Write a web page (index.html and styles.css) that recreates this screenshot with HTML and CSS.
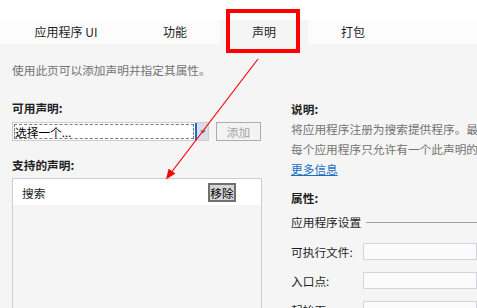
FILE: index.html
```html
<!DOCTYPE html>
<html lang="zh-CN">
<head>
<meta charset="utf-8">
<title>声明</title>
<link rel="stylesheet" href="styles.css">
</head>
<body>
<div class="page">
  <div class="top"></div>
  <div class="tabs">
    <div class="tab tab-wide">应用程序 UI</div>
    <div class="tab">功能</div>
    <div class="tab active">声明</div>
    <div class="tab">打包</div>
  </div>
  <div class="content">
    <div class="desc">使用此页可以添加声明并指定其属性。</div>
    <div class="cols">
      <div class="left">
        <div class="label">可用声明:</div>
        <div class="select-row">
          <div class="select">
            <div class="select-field"><span class="select-text">选择一个...</span></div>
            <div class="select-btn">
              <svg width="6" height="4" viewBox="0 0 6 4"><path d="M0 0.5 L6 0.5 L3 3.5 Z" fill="#5b7fae"/></svg>
            </div>
          </div>
          <div class="btn-add">添加</div>
        </div>
        <div class="label label-list">支持的声明:</div>
        <div class="list">
          <div class="list-row">
            <span class="list-item">搜索</span>
            <span class="btn-remove">移除</span>
          </div>
        </div>
      </div>
      <div class="right">
        <div class="label label-desc">说明:</div>
        <div class="text">将应用程序注册为搜索提供程序。最多只能声明一个此类扩展。</div>
        <div class="text">每个应用程序只允许有一个此声明的实例。</div>
        <div class="text"><a class="link" href="#">更多信息</a></div>
        <div class="label label-props">属性:</div>
        <div class="group">
          <span class="group-title">应用程序设置</span>
          <span class="group-line"></span>
        </div>
        <div class="field">
          <span class="field-label">可执行文件:</span>
          <span class="field-input"></span>
        </div>
        <div class="field">
          <span class="field-label">入口点:</span>
          <span class="field-input"></span>
        </div>
        <div class="field">
          <span class="field-label">起始页:</span>
          <span class="field-input"></span>
        </div>
      </div>
    </div>
  </div>
  <div class="highlight"></div>
  <svg class="arrow" width="477" height="308" viewBox="0 0 477 308">
    <line x1="258" y1="59" x2="170.5" y2="173.5" stroke="#ff0000" stroke-width="1.2"/>
    <polygon points="166,179.5 175.4,173.6 168.6,168.8" fill="#ff0000"/>
  </svg>
</div>
</body>
</html>
```

FILE: styles.css
```css
html, body {
  margin: 0;
  padding: 0;
  height: 100%;
  overflow: hidden;
  background: #ffffff;
}

body {
  font-family: "Noto Sans CJK SC", "Noto Sans", sans-serif;
  font-size: 11.7px;
  color: #1e1e1e;
}

.page {
  position: relative;
  height: 308px;
  display: flex;
  flex-direction: column;
}

.top {
  height: 20px;
  flex: none;
}

.tabs {
  flex: none;
  display: flex;
  gap: 1px;
  height: 24px;
  padding-left: 2px;
  background: #fcfcfc;
}

.tab {
  width: 88px;
  text-align: center;
  line-height: 24px;
  font-size: 12px;
  color: #1e1e1e;
  white-space: nowrap;
}

.tab-wide {
  width: 128px;
}

.tab.active {
  background: #f5f5f5;
}

.content {
  flex: 1;
  display: flex;
  flex-direction: column;
  background: #f5f5f5;
  padding: 16px 0 0 12px;
  min-height: 0;
}

.desc {
  line-height: 20px;
  color: #737373;
  white-space: nowrap;
}

.cols {
  flex: 1;
  display: flex;
  gap: 29px;
  min-height: 0;
}

.left {
  width: 250px;
  flex: none;
  display: flex;
  flex-direction: column;
}

.label {
  font-weight: bold;
  line-height: 20px;
  color: #1e1e1e;
  white-space: nowrap;
}

.left > .label:first-child {
  margin-top: 18px;
}

.select-row {
  display: flex;
  margin-top: 4px;
  height: 19px;
}

.select {
  display: flex;
  width: 197px;
  height: 19px;
  box-sizing: border-box;
  border: 1px solid #cdcdd8;
  background: #ffffff;
}

.select-field {
  flex: 1;
  padding: 1px;
}

.select-text {
  display: block;
  height: 15px;
  box-sizing: border-box;
  border: 1px dashed #7a7a7a;
  line-height: 13px;
  color: #000000;
  white-space: nowrap;
  overflow: hidden;
}

.select-btn {
  width: 11px;
  display: flex;
  align-items: center;
  justify-content: center;
  background: #dcdce6;
  border-left: 2px solid #1272d2;
}

.btn-add {
  margin-left: 7px;
  width: 45px;
  height: 19px;
  box-sizing: border-box;
  border: 1px solid #adadad;
  background: #f3f3f3;
  color: #a2a2a2;
  text-align: center;
  line-height: 17px;
}

.label-list {
  margin-top: 14px;
}

.list {
  flex: 1;
  margin-top: 3px;
  border: 1px solid #ccccdd;
  border-bottom: none;
  background: #f5f5f5;
}

.list-row {
  height: 26px;
  display: flex;
  align-items: center;
  background: #ffffff;
  padding-left: 9px;
}

.list-item {
  color: #1e1e1e;
}

.btn-remove {
  margin-left: auto;
  margin-right: 25px;
  width: 28px;
  height: 19px;
  box-sizing: border-box;
  border: 2px solid #707070;
  background: #d6d6d6;
  color: #000000;
  text-align: center;
  line-height: 15px;
}

.right {
  flex: 1;
  min-width: 0;
  display: flex;
  flex-direction: column;
}

.label-desc {
  margin-top: 19px;
}

.text {
  line-height: 20px;
  color: #737373;
  white-space: nowrap;
}

.link {
  color: #1a6fc4;
  text-decoration: underline;
}

.label-props {
  margin-top: 9px;
}

.group {
  margin-top: 4px;
  height: 20px;
  display: flex;
  align-items: center;
  gap: 5px;
}

.group-title {
  color: #1e1e1e;
  white-space: nowrap;
  line-height: 20px;
}

.group-line {
  flex: 1;
  height: 1px;
  background: #a0a0a0;
}

.field {
  margin-top: 11px;
  height: 17px;
  display: flex;
  align-items: center;
}

.field + .field {
  margin-top: 12px;
}

.field-label {
  width: 72px;
  flex: none;
  line-height: 17px;
  white-space: nowrap;
  color: #1e1e1e;
}

.field-input {
  flex: 1;
  height: 17px;
  box-sizing: border-box;
  border: 1px solid #d4d4dc;
  background: #fbfbfb;
}

.highlight {
  position: absolute;
  left: 226px;
  top: 9px;
  width: 74px;
  height: 44px;
  box-sizing: border-box;
  border: 4px solid #ff0000;
}

.arrow {
  position: absolute;
  left: 0;
  top: 0;
  pointer-events: none;
}
```
